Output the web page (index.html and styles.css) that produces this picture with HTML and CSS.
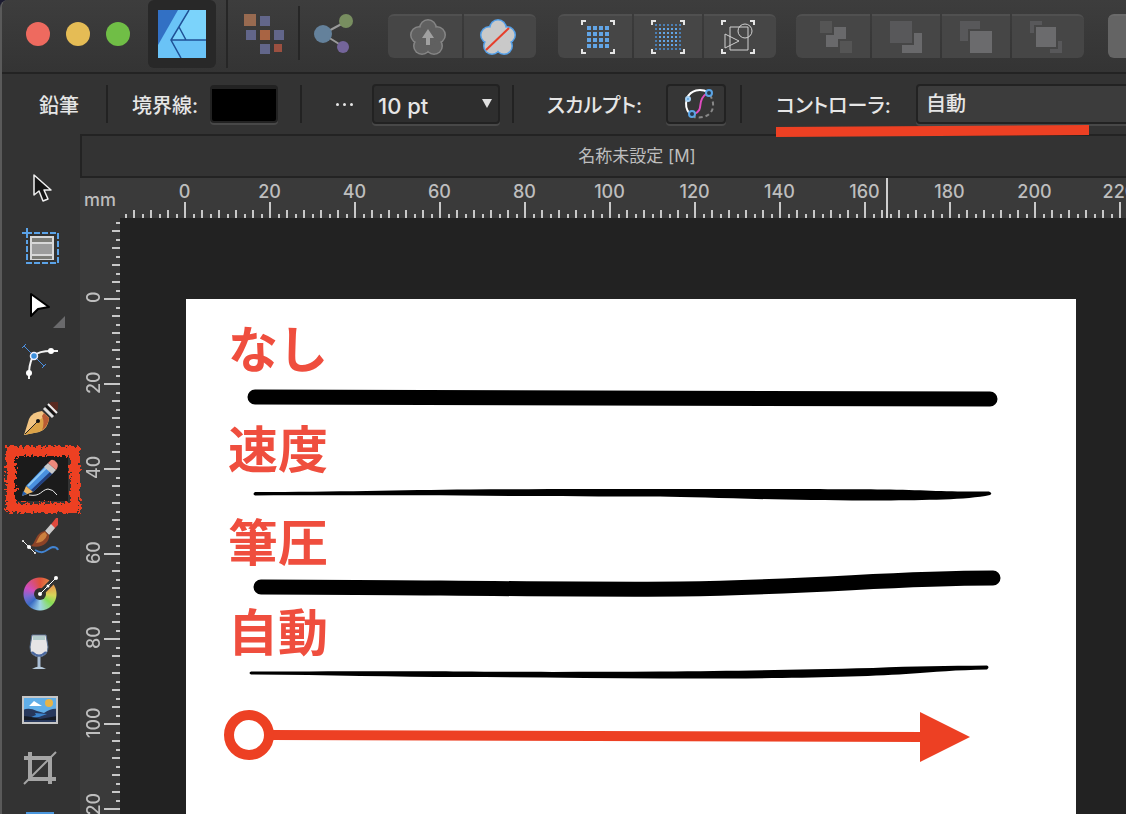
FILE: index.html
```html
<!DOCTYPE html>
<html lang="ja">
<head>
  <meta charset="UTF-8">
  <meta name="viewport" content="width=device-width, initial-scale=1">
  <title>名称未設定 [M]</title>
  <link rel="stylesheet" href="styles.css">
</head>
<body>
<div class="app">

  <header class="titlebar">
    <div class="lights">
      <button class="light close" aria-label="閉じる"></button>
      <button class="light minimize" aria-label="最小化"></button>
      <button class="light expand" aria-label="拡大"></button>
    </div>
    <button class="persona active" aria-label="デザイナー">
      <svg width="48" height="48" viewBox="0 0 48 48">
        <rect width="48" height="48" fill="#6ac3f7"/>
        <path d="M30 0H48V30H13Z" fill="#7bd3fb"/>
        <path d="M0 0H20L0 35Z" fill="#3270c4"/>
        <path d="M31 0L13 30L23 48M13 30H48M21 17L28 30" fill="none" stroke="#1f5096" stroke-width="1.5"/>
      </svg>
    </button>
    <span class="sep tall"></span>
    <button class="persona plain" aria-label="ピクセル">
      <svg width="40" height="40" viewBox="0 0 40 40">
        <g fill="#62668a"><rect x="16" y="2" width="10" height="10"/><rect x="2" y="16" width="10" height="10"/><rect x="30" y="16" width="10" height="10"/><rect x="16" y="30" width="10" height="10"/></g>
        <rect width="12" height="12" fill="#986a50"/>
        <rect x="16" y="16" width="10" height="10" fill="#a96443"/>
        <rect x="30" y="30" width="8" height="8" fill="#9c5040"/>
      </svg>
    </button>
    <span class="sep"></span>
    <button class="persona plain" aria-label="書き出し">
      <svg width="40" height="40" viewBox="0 0 40 40">
        <path d="M9 20L33 7M9 20L30 33" stroke="#9a9a9a" stroke-width="2"/>
        <circle cx="9" cy="20" r="9" fill="#64819b"/>
        <circle cx="32" cy="7" r="7" fill="#788e60"/>
        <circle cx="29" cy="33" r="6" fill="#74659a"/>
      </svg>
    </button>

    <div class="group">
      <button aria-label="同期">
        <svg width="38" height="38" viewBox="0 0 38 38">
          <g fill="#858585"><circle cx="19" cy="10" r="9"/><circle cx="28" cy="17" r="9"/><circle cx="25" cy="28" r="9"/><circle cx="13" cy="28" r="9"/><circle cx="10" cy="17" r="9"/></g>
          <g fill="#606060"><circle cx="19" cy="10" r="7.5"/><circle cx="28" cy="17" r="7.5"/><circle cx="25" cy="28" r="7.5"/><circle cx="13" cy="28" r="7.5"/><circle cx="10" cy="17" r="7.5"/><circle cx="19" cy="20" r="8"/></g>
          <path d="M19 11L25 20H21V27H17V20H13Z" fill="#a0a0a0"/>
        </svg>
      </button>
      <button aria-label="リセット">
        <svg width="38" height="38" viewBox="0 0 38 38">
          <g fill="#55a0e8"><circle cx="19" cy="10" r="9"/><circle cx="28" cy="17" r="9"/><circle cx="25" cy="28" r="9"/><circle cx="13" cy="28" r="9"/><circle cx="10" cy="17" r="9"/></g>
          <g fill="#c9c9c9"><circle cx="19" cy="10" r="7.5"/><circle cx="28" cy="17" r="7.5"/><circle cx="25" cy="28" r="7.5"/><circle cx="13" cy="28" r="7.5"/><circle cx="10" cy="17" r="7.5"/><circle cx="19" cy="20" r="8"/></g>
          <path d="M7 32L30 10" stroke="#e63f2b" stroke-width="2"/>
        </svg>
      </button>
    </div>

    <div class="group">
      <button aria-label="グリッド">
        <svg width="34" height="34" viewBox="0 0 34 34">
          <path d="M1 5V1H5M29 1H33V5M33 29V33H29M5 33H1V29" fill="none" stroke="#e4e4e4" stroke-width="2"/>
          <path d="M6 8H28M6 14H28M6 20H28M6 26H28" stroke="#62a5e6" stroke-width="4" stroke-dasharray="4 2"/>
        </svg>
      </button>
      <button aria-label="スナップ">
        <svg width="34" height="34" viewBox="0 0 34 34">
          <path d="M1 5V1H5M29 1H33V5M33 29V33H29M5 33H1V29" fill="none" stroke="#e4e4e4" stroke-width="2"/>
          <path d="M4 5H30M4 29H30M4 9H6M4 13H6M4 17H6M4 21H6M4 25H6M28 9H30M28 13H30M28 17H30M28 21H30M28 25H30" stroke="#4b7fb4" stroke-width="2" stroke-dasharray="2 2"/>
          <path d="M8 9H26M8 13H26M8 17H26M8 21H26M8 25H26" stroke="#62a5e6" stroke-width="2" stroke-dasharray="2 2"/>
        </svg>
      </button>
      <button aria-label="オブジェクトにスナップ">
        <svg width="34" height="34" viewBox="0 0 34 34">
          <path d="M1 5V1H5M29 1H33V5M33 29V33H29M5 33H1V29" fill="none" stroke="#e4e4e4" stroke-width="2"/>
          <g fill="none" stroke="#d0d0d0"><path d="M9 7H27V30H9ZM4 14V28L18 21Z"/><circle cx="24" cy="11" r="7"/></g>
        </svg>
      </button>
    </div>

    <div class="group boolean">
      <button aria-label="追加">
        <svg width="34" height="34" viewBox="0 0 34 34">
          <path d="M1 1H13V13H1ZM21 21H33V33H21Z" fill="#555"/>
          <path d="M15 7H27V19H19V27H7V15H15Z" fill="#69696b"/>
        </svg>
      </button>
      <button aria-label="減算">
        <svg width="34" height="34" viewBox="0 0 34 34">
          <path d="M1 1H23V23H1Z" fill="#58585a"/>
          <path d="M25 13H33V33H13V25H25Z" fill="#69696b"/>
        </svg>
      </button>
      <button aria-label="交差">
        <svg width="34" height="34" viewBox="0 0 34 34">
          <path d="M1 1H21V9H9V21H1Z" fill="#58585a"/>
          <path d="M11 11H33V33H11Z" fill="#6b6b6d"/>
        </svg>
      </button>
      <button aria-label="分割">
        <svg width="34" height="34" viewBox="0 0 34 34">
          <path d="M1 1H13V5H5V13H1ZM29 21H33V33H21V29H29Z" fill="#58585a"/>
          <path d="M7 7H27V27H7Z" fill="#6b6b6d"/>
        </svg>
      </button>
    </div>
    <div class="group bright">
      <button aria-label="挿入"></button>
    </div>
  </header>

  <div class="context">
    <span class="tool-name">鉛筆</span>
    <span class="rule"></span>
    <label class="stroke-label" for="stroke">境界線:</label>
    <button class="swatch" id="stroke"></button>
    <span class="rule"></span>
    <button class="more" aria-label="境界線の詳細"><i></i><i></i><i></i></button>
    <div class="width-box">
      <select aria-label="幅"><option>10 pt</option></select>
    </div>
    <span class="rule"></span>
    <label class="sculpt-label" for="sculpt">スカルプト:</label>
    <button class="sculpt" id="sculpt">
      <svg width="36" height="36" viewBox="0 0 36 36" fill="none" stroke-width="2">
        <path d="M28 9C36 22 28 34 12 31" stroke="#888" stroke-dasharray="4 3"/>
        <path d="M26 6C18 2 9 4 5 12C3 19 4 24 8 28" stroke="#fff"/>
        <path d="M24 8C14 15 23 24 12 28" stroke="#e04cc0"/>
        <circle cx="27" cy="7" r="3" stroke="#5aa4e4" fill="#26384c"/>
        <circle cx="10" cy="28" r="3" stroke="#5aa4e4" fill="#26384c"/>
        <circle cx="6" cy="13" r="2" stroke="#a8d2f4" fill="#5aa4e4"/>
      </svg>
    </button>
    <span class="rule"></span>
    <div class="controller">
      <label for="controller">コントローラ:</label>
      <select id="controller"><option>自動</option><option>なし</option><option>速度</option><option>筆圧</option></select>
      <svg class="underline" width="314" height="12" viewBox="0 0 314 12"><path d="M0 2L313 0V10L0 12Z" fill="#ed4023"/></svg>
    </div>
  </div>

  <div class="workspace">
    <nav class="tools">
      <button aria-label="移動">
        <svg width="48" height="48" viewBox="0 0 48 48"><path d="M17 11V31L22 27L26 37L31 35L27 26H34Z" fill="#151515" stroke="#f0f0f0" stroke-width="1.5" stroke-linejoin="round"/></svg>
      </button>
      <button aria-label="アートボード">
        <svg width="48" height="48" viewBox="0 0 48 48">
          <rect x="14" y="15" width="22" height="22" fill="#9c9c9c" stroke="#d8d8d8" stroke-width="2"/>
          <path d="M15 18H35M15 35H35" stroke="#7d7d78" stroke-width="4"/>
          <path d="M15 21H35M15 33H35" stroke="#d8d8d8" stroke-width="2"/>
          <path d="M5 11H15M10 6V16" stroke="#5ba3e8" stroke-width="2"/>
          <path d="M17 11H41V41H10V18" fill="none" stroke="#5ba3e8" stroke-width="2" stroke-dasharray="6 2"/>
        </svg>
      </button>
      <button aria-label="ノード">
        <svg width="48" height="48" viewBox="0 0 48 48">
          <path d="M14 14V36L21 29L32 27Z" fill="#fff" stroke="#000" stroke-width="2" stroke-linejoin="round"/>
          <path d="M48 36V48H36Z" fill="#6a6a6c"/>
        </svg>
      </button>
      <button aria-label="コーナー">
        <svg width="48" height="48" viewBox="0 0 48 48">
          <path d="M12 41V34C13 18 18 13 34 13H41" fill="none" stroke="#f4f4f4" stroke-width="2"/>
          <path d="M7 8L27 28M5 10L9 6M25 30L29 26" stroke="#4c8fe0" stroke-width="1"/>
          <circle cx="34" cy="13" r="3" fill="#fff"/><circle cx="12" cy="35" r="3" fill="#fff"/>
          <circle cx="17" cy="18" r="3.5" fill="#3c8fdc" stroke="#eef" stroke-width="1.5"/>
        </svg>
      </button>
      <button aria-label="ペン">
        <svg width="48" height="48" viewBox="0 0 48 48">
          <path d="M32 8L34 6H41V13L37 17Z" fill="#5a2a20"/>
          <path d="M7 39L12 23Q15 16 25 15L32 22Q31 33 22 36Z" fill="#f2c583"/>
          <path d="M7 39L20 26L29 19L32 22Q31 33 22 36Z" fill="#dca348"/>
          <path d="M27 17L32 22Q31 30 25 34Q28 27 25 20Z" fill="#b95b35"/>
          <path d="M8 38L20 26" stroke="#222"/><circle cx="21" cy="25" r="2" fill="#151515"/>
          <path d="M27 12L36 21" stroke="#ddd" stroke-width="3"/><path d="M29 10L38 19" stroke="#111" stroke-width="2"/><path d="M31 8L40 17" stroke="#f0f0f0" stroke-width="2"/>
        </svg>
      </button>
      <button class="selected" aria-label="鉛筆">
        <svg width="48" height="48" viewBox="0 0 48 48">
          <path d="M9 32L29 11L37 18L16 38Z" fill="#4990df"/>
          <path d="M14 36L35 16L37 18L16 38Z" fill="#223e7c"/>
          <path d="M11 32L31 12" stroke="#8bc8f6" stroke-width="2"/>
          <path d="M9 32L16 38L5 42Z" fill="#edb765"/><path d="M6 37L10 40L5 42Z" fill="#235fae"/>
          <path d="M27 13L31 9L39 16L35 20Z" fill="#c9c9c9"/>
          <path d="M31 9L34 6Q37 5 40 9Q42 12 39 16Z" fill="#ee897c"/>
          <path d="M12 41C24 43 24 36 31 35Q36 35 40 41" fill="none" stroke="#eee"/>
        </svg>
        <svg class="scribble" width="84" height="78" viewBox="0 0 84 78">
          <filter id="rough" x="-10%" y="-10%" width="120%" height="120%">
            <feTurbulence type="fractalNoise" baseFrequency="0.35" numOctaves="2" seed="4"/>
            <feDisplacementMap in="SourceGraphic" scale="10"/>
          </filter>
          <rect x="11" y="11" width="64" height="57" fill="none" stroke="#ed4023" stroke-width="10" filter="url(#rough)"/>
        </svg>
      </button>
      <button aria-label="ベクターブラシ">
        <svg width="48" height="48" viewBox="0 0 48 48">
          <path d="M18 38C28 44 30 36 36 35Q40 35 41 38" fill="none" stroke="#4284d2" stroke-width="2"/>
          <path d="M32 15L39 6H41V13L35 19Z" fill="#df493d"/>
          <path d="M28 19L34 12L38 16L32 23Z" fill="#cbcbcb"/>
          <path d="M28 19L32 23C33 31 24 37 14 34C19 31 18 21 28 19Z" fill="#8c4327"/>
          <path d="M28 20C22 22 21 28 19 31Q28 30 30 23Z" fill="#cb813f"/>
          <path d="M6 29L18 41" stroke="#eee" stroke-width="1"/><circle cx="12" cy="35" r="2" fill="#fff"/><circle cx="6" cy="29" r="1" fill="#fff"/><circle cx="18" cy="41" r="1" fill="#fff"/>
        </svg>
      </button>
      <button aria-label="塗りつぶし">
        <svg class="wheel" width="48" height="48" viewBox="0 0 48 48">
          <path d="M23 24L39 8" stroke="#333" stroke-width="6"/>
          <circle cx="23" cy="24" r="6" fill="#303030"/>
          <path d="M23 24L39 8" stroke="#fff"/><circle cx="23" cy="24" r="2" fill="#fff"/><circle cx="39" cy="8" r="2" fill="#fff"/><circle cx="31" cy="16" r="1.5" fill="#fff"/>
        </svg>
      </button>
      <button aria-label="透明">
        <svg width="48" height="48" viewBox="0 0 48 48">
          <path d="M15 7H29L31 19Q31 28 22 29Q13 28 13 19Z" fill="#e6e4e5" stroke="#59708f" stroke-width="1"/>
          <path d="M16 8H28L28 12H16Z" fill="#b4cccc"/>
          <path d="M15 24Q22 31 29 24" fill="none" stroke="#4a68a0" stroke-width="2"/>
          <path d="M22 29V39" stroke="#a9bdd4" stroke-width="3"/><path d="M15 41Q22 36 29 41Z" fill="#b7cadb"/>
        </svg>
      </button>
      <button aria-label="画像の配置">
        <svg width="48" height="48" viewBox="0 0 48 48">
          <rect x="6" y="11" width="34" height="26" fill="#60aee8"/>
          <circle cx="32" cy="17" r="4" fill="#e7b448"/>
          <path d="M12 20L17 15L20 17L25 20Z" fill="#fff"/>
          <path d="M6 24Q12 21 20 25L27 27Q35 22 40 23V37H6Z" fill="#27385c"/>
          <path d="M18 27L30 28L22 31L12 32L19 29Z" fill="#3b85cf"/><path d="M6 30Q17 31 23 33L40 30V34H6Z" fill="#161c26"/>
          <rect x="6" y="11" width="34" height="26" fill="none" stroke="#c6c6c6" stroke-width="2"/>
        </svg>
      </button>
      <button aria-label="切り抜き">
        <svg width="48" height="48" viewBox="0 0 48 48" fill="none" stroke="#a5a5a5">
          <path d="M13 8V35H39M7 14H33V40" stroke-width="4"/><path d="M7 40L39 8" stroke-width="2"/>
        </svg>
      </button>
      <button aria-label="長方形">
        <svg width="48" height="48" viewBox="0 0 48 48"><rect x="9" y="10" width="28" height="28" fill="#4a96dc"/></svg>
      </button>
    </nav>

    <main class="document">
      <h1 class="tab">名称未設定 [M]</h1>
      <div class="ruler-row">
        <div class="unit">mm</div>
        <div class="ruler-x">
          <span>0</span><span>20</span><span>40</span><span>60</span><span>80</span><span>100</span><span>120</span><span>140</span><span>160</span><span>180</span><span>200</span><span>220</span>
          <i class="pointer"></i>
        </div>
      </div>
      <div class="view">
        <div class="ruler-y">
          <span>0</span><span>20</span><span>40</span><span>60</span><span>80</span><span>100</span><span>120</span>
        </div>
        <div class="canvas">
          <div class="artboard">
            <svg width="890" height="516" viewBox="0 0 890 516">
              <g class="notes">
                <text x="42" y="69">なし</text>
                <text x="42" y="169">速度</text>
                <text x="42" y="262">筆圧</text>
                <text x="42" y="352">自動</text>
              </g>
              <!-- なし -->
              <path d="M69 98L804 100" stroke="#000" stroke-width="15" stroke-linecap="round"/>
              <!-- 速度 -->
              <path d="M69 193C150 193 214 191 284 190.500S420 190 474 190S640 190 697 190.500C740 191 760 193 803 192.500Q807 194 804 196C780 201 740 201 697 201.500C600 202 520 198 474 197.500C300 197 200 196 69 196.500Q66 195 69 193Z"/>
              <!-- 筆圧 -->
              <path d="M75 288C200 288 380 291 494 290C640 288 700 279 807 279" fill="none" stroke="#000" stroke-width="15" stroke-linecap="round"/>
              <!-- 自動 -->
              <path d="M65 372.500C140 372.500 220 372 274 372.500S400 373 474 372.500S600 371 687 369C730 367 760 367 801 366.500Q804 368 801 370.500C770 371 750 373 720 375C660 379 540 380 474 379.500S340 378 274 378S140 376 65 375.500Q62 374 65 372.500Z"/>
              <g stroke="#ed4023" stroke-width="10">
                <path d="M84 436L736 438"/>
                <circle cx="63" cy="436" r="20" fill="#fff"/>
              </g>
              <path d="M734 413L784 438L734 463Z" fill="#ed4023"/>
            </svg>
          </div>
        </div>
      </div>
    </main>
  </div>
</div>
</body>
</html>
```
FILE: styles.css
```css
* {
  box-sizing: border-box;
}
body {
  margin: 0;
  background: #1c1c30;
  font-family: Inter, "Noto Sans CJK JP", sans-serif;
  font-size: 20px;
  color: #e6e6e6;
}
button {
  padding: 0;
  border: 0;
  background: none;
  font: inherit;
  color: inherit;
}
svg {
  display: block;
}
.app {
  display: flex;
  flex-direction: column;
  height: 100vh;
  overflow: hidden;
  border-left: 2px solid #5a5a5a;
  border-top-left-radius: 8px;
  background: #333;
}

/* title bar */
.titlebar {
  display: flex;
  flex: none;
  height: 74px;
  padding-left: 24px;
  border-bottom: 2px solid #232323;
  background: linear-gradient(#3d3d3d, #343434);
}
.titlebar > * {
  flex: none;
}
.lights {
  display: flex;
  gap: 16px;
  margin: 22px 18px 0 0;
}
.light {
  width: 24px;
  height: 24px;
  border-radius: 50%;
}
.close { background: #ee6a5f; }
.minimize { background: #e5bc55; }
.expand { background: #70be46; }
.persona {
  display: flex;
  align-items: center;
  justify-content: center;
  height: 68px;
}
.persona.active {
  width: 68px;
  border-radius: 6px;
  background: #282828;
}
.sep {
  width: 2px;
  height: 54px;
  margin: 6px 14px 0;
  background: #262626;
}
.sep.tall {
  height: 68px;
  margin: 0 16px 0 10px;
}
.group {
  display: flex;
  gap: 2px;
  height: 44px;
  margin: 14px 0 0 22px;
}
.plain + .group {
  margin-left: 34px;
}
.group.boolean {
  margin-left: 20px;
}
.group button {
  display: flex;
  align-items: center;
  justify-content: center;
  width: 68px;
  border-top: 2px solid #505050;
  background: #464646;
}
.group button:first-child {
  width: 74px;
  padding-left: 6px;
  border-radius: 6px 0 0 6px;
}
.group button:last-child {
  width: 72px;
  padding-right: 4px;
  border-radius: 0 6px 6px 0;
}
.group.bright {
  margin-left: 24px;
}
.group.bright button {
  border-color: #6a6a6a;
  border-radius: 6px;
  background: #646464;
}

/* context bar */
.context {
  display: flex;
  flex: none;
  align-items: center;
  height: 60px;
  padding-left: 37px;
  font-weight: 500;
  font-feature-settings: "palt";
  white-space: nowrap;
}
.context > * {
  flex: none;
}
.rule {
  width: 2px;
  height: 38px;
  background: #222;
}
.tool-name {
  width: 67px;
}
.stroke-label {
  width: 78px;
  margin-left: 24px;
}
.swatch {
  width: 68px;
  height: 38px;
  margin-right: 22px;
  border: 2px solid #222;
  border-top-width: 4px;
  border-radius: 4px;
  background: #000;
  box-shadow: 0 2px 0 #484848;
}
.more {
  display: flex;
  gap: 4px;
  justify-content: center;
  width: 20px;
  margin: 0 18px 0 32px;
}
.more i {
  width: 3px;
  height: 3px;
  border-radius: 50%;
  background: #e6e6e6;
}
select {
  height: 40px;
  border: 2px solid #222;
  border-radius: 4px;
  box-shadow: 0 2px 0 #484848;
  appearance: none;
  font: inherit;
  color: #e6e6e6;
}
.width-box {
  position: relative;
  width: 128px;
  margin-right: 12px;
}
.width-box select {
  width: 100%;
  padding: 4px 4px 0;
  background: #2e2e2e;
  font-size: 22px;
}
.width-box::after {
  content: "";
  position: absolute;
  top: 15px;
  right: 8px;
  border: 5px solid transparent;
  border-top: 9px solid #e0e0e0;
  border-bottom: 0;
}
.sculpt-label {
  width: 119px;
  margin-left: 33px;
}
.sculpt {
  display: flex;
  align-items: center;
  justify-content: center;
  width: 60px;
  height: 40px;
  margin-right: 14px;
  padding-left: 8px;
  border: 2px solid #222;
  border-radius: 4px;
  background: #363636;
  box-shadow: 0 2px 0 #484848;
}
.context .controller {
  position: relative;
  display: flex;
  flex: 1;
  align-items: center;
  margin: 0 -20px 0 34px;
}
.controller label {
  width: 140px;
}
.controller select {
  flex: 1;
  padding: 0 8px;
  background: #3c3c3c;
}
.underline {
  position: absolute;
  left: 0;
  top: 41px;
}

/* tools */
.workspace {
  display: flex;
  flex: 1;
  min-height: 0;
}
.tools {
  display: flex;
  flex: none;
  flex-direction: column;
  width: 78px;
  padding-top: 25px;
}
.tools button {
  position: relative;
  display: flex;
  flex: none;
  align-items: center;
  justify-content: center;
  height: 58px;
}
.tools .selected {
  z-index: 1;
  background: linear-gradient(#1b1b1b, #1b1b1b) center / 54px 46px no-repeat;
}
.scribble {
  position: absolute;
  left: -2px;
  top: -9px;
}
.wheel {
  background:
    radial-gradient(circle at 23px 24px, transparent 16px, #333 17px),
    conic-gradient(at 23px 24px, #e0523a, #e6a04e 60deg, #d8d45a 95deg, #86dc58 130deg, #9fd4e8 180deg, #3a6cc4 225deg, #7a6ad0 260deg, #cf4cc0 295deg, #e0523a);
}

/* document */
.document {
  display: flex;
  flex: 1;
  flex-direction: column;
  min-width: 0;
}
.tab {
  flex: none;
  height: 44px;
  margin: 0;
  padding-left: 66px;
  border: 2px solid #232323;
  border-right: 0;
  font-size: 17px;
  font-weight: 400;
  line-height: 40px;
  text-align: center;
  color: #bebebe;
}
.ruler-row {
  display: flex;
  flex: none;
  height: 40px;
  font-size: 18px;
  font-weight: 500;
  color: #bebebe;
  background: #3a3a3a;
}
.unit {
  flex: none;
  width: 40px;
  padding-left: 4px;
  line-height: 44px;
}
.ruler-x {
  position: relative;
  display: flex;
  flex: 1;
  min-width: 0;
  overflow: hidden;
  padding-left: 22px;
  line-height: 28px;
  text-align: center;
  background:
    repeating-linear-gradient(90deg, #c8c8c8 0 2px, transparent 2px 85px) -21px 24px / 1785px 16px repeat-x,
    repeating-linear-gradient(90deg, #c8c8c8 0 2px, transparent 2px 17px) -4px 32px / 1785px 8px repeat-x,
    repeating-linear-gradient(90deg, transparent 0 9px, #c8c8c8 9px 11px, transparent 11px 17px) -4px 36px / 1785px 4px repeat-x;
}
.ruler-x span {
  flex: 0 0 85px;
}
.pointer {
  position: absolute;
  left: 766px;
  top: 0;
  width: 2px;
  height: 40px;
  background: #d0d0d0;
}
.view {
  display: flex;
  flex: 1;
  min-height: 0;
}
.ruler-y {
  display: flex;
  flex: none;
  flex-direction: column;
  width: 40px;
  overflow: hidden;
  padding-top: 37px;
  font-size: 18px;
  font-weight: 500;
  line-height: 28px;
  text-align: center;
  color: #bebebe;
  background:
    repeating-linear-gradient(#c8c8c8 0 2px, transparent 2px 85px) 24px -5px / 16px 1785px repeat-y,
    repeating-linear-gradient(#c8c8c8 0 2px, transparent 2px 17px) 32px -5px / 8px 1785px repeat-y,
    repeating-linear-gradient(transparent 0 9px, #c8c8c8 9px 11px, transparent 11px 17px) 36px -5px / 4px 1785px repeat-y,
    #3a3a3a;
}
.ruler-y span {
  flex: 0 0 85px;
  width: 28px;
  writing-mode: vertical-rl;
  transform: rotate(180deg);
}
.canvas {
  display: flex;
  flex: 1;
  min-width: 0;
  overflow: hidden;
  padding: 81px 50px 0 66px;
  background: #222;
}
.artboard {
  flex: 1;
  overflow: hidden;
  background: #fff;
}
.notes {
  font-family: "Noto Sans CJK JP", sans-serif;
  font-size: 50px;
  font-weight: 700;
  fill: #ef4e3e;
}
```
